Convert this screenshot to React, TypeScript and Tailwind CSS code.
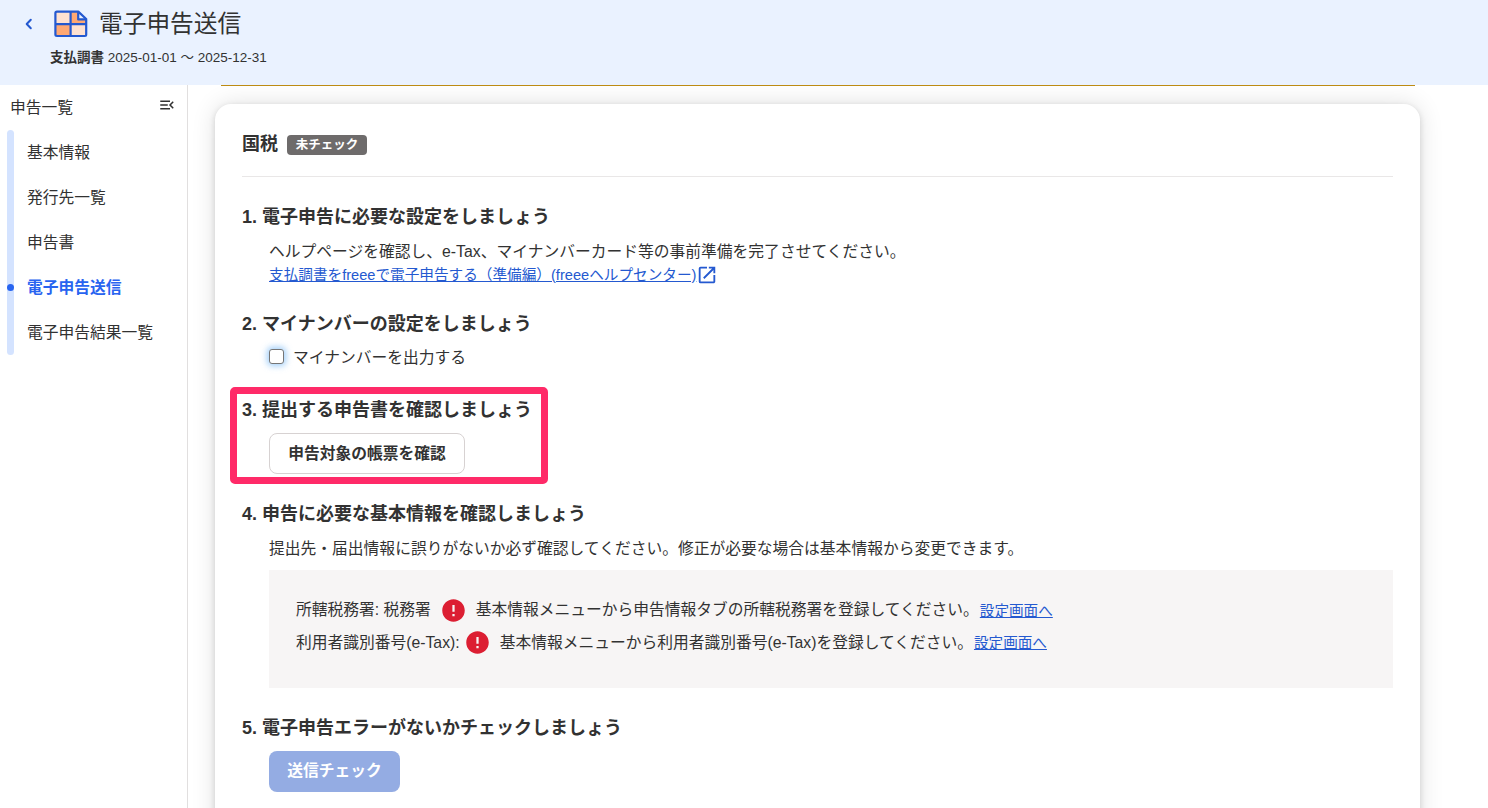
import { MdError, MdMenuOpen, MdOpenInNew } from 'react-icons/md'
import clsx from 'clsx'
import type { ReactNode } from 'react'

const navItems = [
  { label: '基本情報' },
  { label: '発行先一覧' },
  { label: '申告書' },
  { label: '電子申告送信', active: true },
  { label: '電子申告結果一覧' },
]

function FormIcon() {
  return (
    <svg width="34" height="28" viewBox="0 0 34 28" fill="none">
      <path d="M2 2H17V14H2Z" fill="#ffe2d1" />
      <path d="M17 2H24L32 9V14H17Z" fill="#ffa873" />
      <path d="M2 14H17V26H2Z" fill="#ffa873" />
      <path d="M17 14H32V26H17Z" fill="#ffe2d1" />
      <path d="M24 2V9H32Z" fill="#eaf2ff" />
      <g stroke="#2459d0" strokeWidth="2.2" strokeLinejoin="round">
        <path d="M3 1.6H24.3L32.2 9V24.6Q32.2 26 30.8 26H3Q1.4 26 1.4 24.6V3Q1.4 1.6 3 1.6Z" />
        <path d="M16.6 2V26M2 14.2H32M24.2 2V9.4H32" />
      </g>
    </svg>
  )
}

function Header() {
  return (
    <header className="h-[85px] shrink-0 bg-[#eaf2ff]">
      <div className="flex h-[46px] items-center pl-6 pt-0.5">
        <svg width="10" height="14" viewBox="0 0 10 14" fill="none" className="mr-5">
          <path d="M6.8 2.7L2.7 7L6.8 11.3" stroke="#2459d0" strokeWidth="2" strokeLinecap="round" strokeLinejoin="round" />
        </svg>
        <FormIcon />
        <h1 className="ml-[11px] text-[23.7px] leading-[36px]">電子申告送信</h1>
      </div>
      <p className="pl-[50px] pt-px text-[13.5px] leading-[22px]">
        <span className="font-bold">支払調書</span> 2025-01-01 ～ 2025-12-31
      </p>
    </header>
  )
}

function Sidebar() {
  return (
    <aside className="w-[188px] shrink-0 border-r border-[#e1dfdf] text-[15.75px]">
      <div className="flex h-[45px] items-center justify-between pl-2.5 pr-[11px]">
        <span>申告一覧</span>
        <MdMenuOpen size={18} className="-mt-1.5" />
      </div>
      <nav className="flex">
        <div className="ml-[7px] mr-[13px] h-[225px] w-[7px] rounded-full bg-[#d4e3ff]">
          <div className="mt-[154px] size-[7px] rounded-full bg-[#2864f0]" />
        </div>
        <ul>
          {navItems.map((item) => (
            <li
              key={item.label}
              className={clsx('h-[45px] leading-[45px]', item.active && 'font-bold text-[#2864f0]')}
            >
              {item.label}
            </li>
          ))}
        </ul>
      </nav>
    </aside>
  )
}

function StepTitle({ children }: { children: ReactNode }) {
  return <h3 className="h-[27px] text-[18px] font-bold leading-[29px]">{children}</h3>
}

function SettingsLink() {
  return (
    <a href="#" className="ml-px pt-[3px] text-[14.6px] text-[#2459d0] underline">
      設定画面へ
    </a>
  )
}

export default function App() {
  return (
    <div className="flex h-[808px] w-[1488px] flex-col overflow-hidden bg-white font-['Liberation_Sans','Noto_Sans_CJK_JP',sans-serif] text-[#323232]">
      <Header />
      <div className="flex min-h-0 flex-1">
        <Sidebar />
        <main className="min-w-0 flex-1 overflow-hidden pl-[27px]">
          <div className="ml-[6px] h-px w-[1194px] bg-[#be8c14]" />
          <div className="mt-[18px] h-[800px] w-[1205px] rounded-2xl bg-white px-[27px] pt-[26px] shadow-[0_0_24px_rgba(0,0,0,0.12),0_2px_6px_rgba(0,0,0,0.14)]">
            <div className="flex h-[47px] items-start border-b border-[#e9e7e7]">
              <h2 className="text-[18px] font-bold leading-[29px]">国税</h2>
              <span className="ml-[9px] mt-[5px] h-5 w-20 rounded bg-[#6e6b6b] text-center text-[12.5px] font-bold leading-5 text-white">
                未チェック
              </span>
            </div>

            <section className="mt-[26px]">
              <StepTitle>1. 電子申告に必要な設定をしましょう</StepTitle>
              <div className="pl-[27px] pt-2.5">
                <p className="text-[15.78px] leading-6">
                  ヘルプページを確認し、e-Tax、マイナンバーカード等の事前準備を完了させてください。
                </p>
                <a href="#" className="flex h-[22px] items-center text-[14.63px] leading-[22px] text-[#2459d0]">
                  <span className="underline">支払調書をfreeeで電子申告する（準備編）(freeeヘルプセンター)</span>
                  <MdOpenInNew size={22} />
                </a>
              </div>
            </section>

            <section className="mt-6">
              <StepTitle>2. マイナンバーの設定をしましょう</StepTitle>
              <label className="flex h-[41px] items-center pl-[27px] text-[15.75px]">
                <span className="mb-0.5 mr-[9px] size-[15px] rounded-[3px] border border-[#767676] bg-white shadow-[0_0_6px_2px_rgba(100,175,245,0.6)]" />
                マイナンバーを出力する
              </label>
            </section>

            <section className="relative mt-[18px]">
              <StepTitle>3. 提出する申告書を確認しましょう</StepTitle>
              <button className="ml-[27px] mt-2.5 flex h-[41px] w-[196px] items-center justify-center rounded-lg border border-[#d7d2d2] bg-white text-[15.75px] font-bold">
                申告対象の帳票を確認
              </button>
              <div className="absolute -left-3 -top-[9px] h-[97px] w-[318px] rounded-[5px] border-[7px] border-[#ff2a68]" />
            </section>

            <section className="mt-[26px]">
              <StepTitle>4. 申告に必要な基本情報を確認しましょう</StepTitle>
              <div className="pl-[27px] pt-2.5 text-[15.75px]">
                <p className="text-[15.78px] leading-6">
                  提出先・届出情報に誤りがないか必ず確認してください。修正が必要な場合は基本情報から変更できます。
                </p>
                <div className="mt-[9px] h-[118px] bg-[#f7f5f5] px-[27px] pt-6">
                  <div className="flex h-8 items-center">
                    <span>所轄税務署: 税務署</span>
                    <MdError size={27} className="mx-[9px] text-[#dc1e32]" />
                    <span>基本情報メニューから申告情報タブの所轄税務署を登録してください。</span>
                    <SettingsLink />
                  </div>
                  <div className="flex h-[33px] items-center">
                    <span>利用者識別番号(e-Tax):</span>
                    <MdError size={27} className="ml-1 mr-[9px] text-[#dc1e32]" />
                    <span>基本情報メニューから利用者識別番号(e-Tax)を登録してください。</span>
                    <SettingsLink />
                  </div>
                </div>
              </div>
            </section>

            <section className="mt-[26px]">
              <StepTitle>5. 電子申告エラーがないかチェックしましょう</StepTitle>
              <button className="ml-[27px] mt-2.5 flex h-[41px] w-[131px] items-center justify-center rounded-lg bg-[#94ace3] pb-0.5 text-[15.75px] font-bold text-white">
                送信チェック
              </button>
            </section>
          </div>
        </main>
      </div>
    </div>
  )
}
